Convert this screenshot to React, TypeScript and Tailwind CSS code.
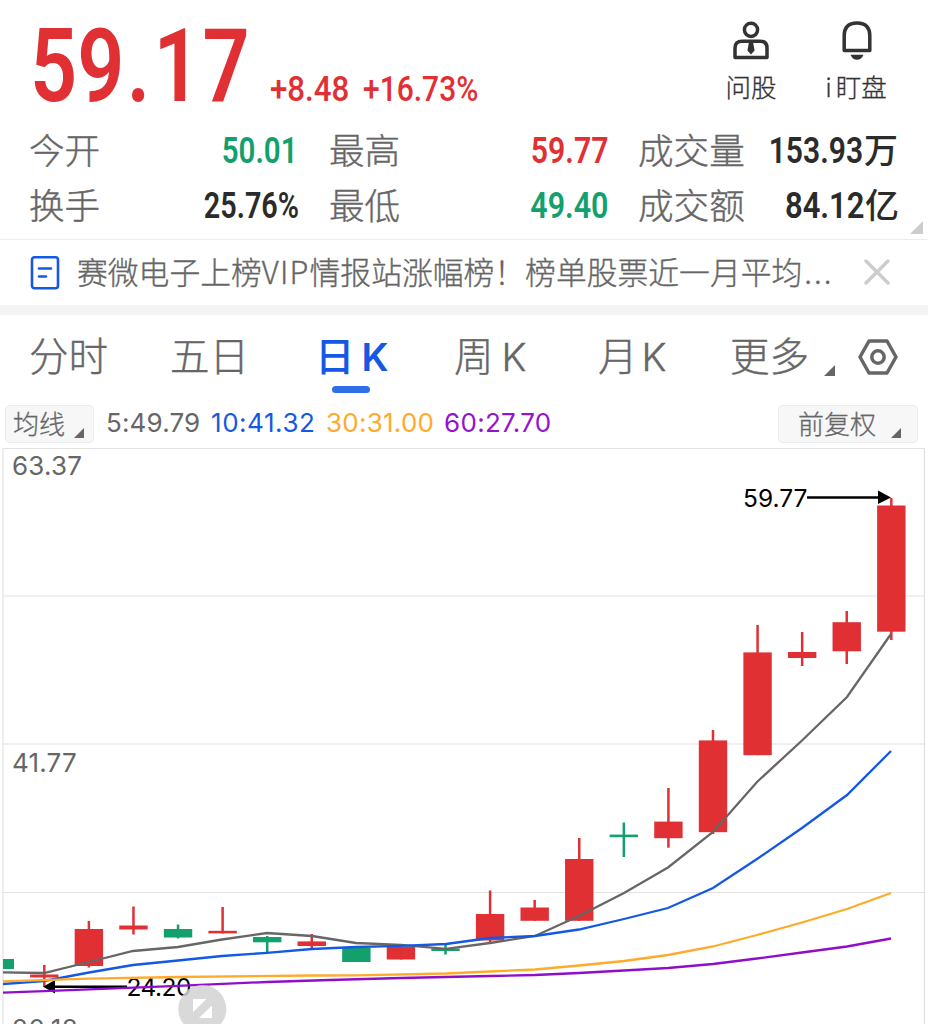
import clsx from "clsx"
import type { ReactNode } from "react"

type Candle = {
  high: number
  top: number
  bottom: number
  low: number
  up?: boolean
}

const RED = "#e03034"
const GREEN = "#12a06c"

// y positions on the chart canvas, one entry per trading day
const candles: Candle[] = [
  { high: 965, top: 974.5, bottom: 977.5, low: 987, up: true },
  { high: 921, top: 929, bottom: 966, low: 967.5, up: true },
  { high: 906.5, top: 925.5, bottom: 929.5, low: 934.5, up: true },
  { high: 924.5, top: 929, bottom: 937.5, low: 938.5 },
  { high: 907, top: 930.8, bottom: 933.4, low: 933.4, up: true },
  { high: 936, top: 937, bottom: 942.3, low: 952 },
  { high: 934, top: 941.4, bottom: 946, low: 948.5, up: true },
  { high: 948, top: 948, bottom: 962, low: 962 },
  { high: 947, top: 947, bottom: 959.5, low: 959.5, up: true },
  { high: 944.5, top: 948.5, bottom: 951, low: 954.5 },
  { high: 890.5, top: 914, bottom: 940.5, low: 942.5, up: true },
  { high: 900, top: 907.5, bottom: 920.8, low: 920.8, up: true },
  { high: 838, top: 859, bottom: 920.8, low: 920.8, up: true },
  { high: 822.5, top: 834.6, bottom: 837.2, low: 857 },
  { high: 788, top: 821.6, bottom: 838.2, low: 847.7, up: true },
  { high: 730, top: 740.4, bottom: 832.2, low: 834, up: true },
  { high: 625, top: 652.4, bottom: 755.2, low: 755.2, up: true },
  { high: 632, top: 652, bottom: 658, low: 666, up: true },
  { high: 611, top: 622.2, bottom: 651.3, low: 664, up: true },
  { high: 498, top: 505.5, bottom: 631.7, low: 640, up: true },
]

const averages = [
  {
    label: "5:49.79",
    textClass: "w-[105px] tracking-[0.15px] text-[#666666]",
    color: "#666666",
    points:
      "3,972.3 44,973 89,962 133,951 178,947 222,939.5 267,933 312,936 356,943 401,944.8 446,948.8 490,943 535,936 579,916 624,893 668,867.5 713,832 757,782 802,740.5 847,697 891,634",
  },
  {
    label: "10:41.32",
    textClass: "w-[115px] tracking-[0.55px] text-[#1458e4]",
    color: "#1458e4",
    points:
      "3,984 44,981 89,972.5 133,965 178,960.5 222,956 267,952.8 312,949 356,947 401,945.8 446,944 490,938 535,936 579,929.5 624,919 668,908 713,888 757,859 802,828 847,795 891,751",
  },
  {
    label: "30:31.00",
    textClass: "w-[118px] tracking-[0.25px] text-[#ffaa2b]",
    color: "#ffaa2b",
    points:
      "3,981.3 89,978.7 178,977 312,975.5 356,975.3 446,973.5 490,971.5 535,969.5 579,965.5 624,961 668,955 713,946.5 757,935 802,922.5 847,909 891,893",
  },
  {
    label: "60:27.70",
    textClass: "tracking-[0.3px] text-[#9413d0]",
    color: "#8f0fc9",
    points:
      "3,992.7 44,991.2 89,989.3 178,985.8 267,982 330,980 401,978 490,976 535,975 579,973 624,970.5 668,968 713,964 757,958.5 802,952.5 847,946.5 891,938.5",
  },
]

function Corner({ className }: { className?: string }) {
  return (
    <svg viewBox="0 0 10 10" className={clsx("shrink-0 fill-current", className)}>
      <path d="M10 0V10H0Z" />
    </svg>
  )
}

function Num({ children, className }: { children: ReactNode; className?: string }) {
  return (
    <span
      className={clsx(
        "mt-px inline-block origin-right whitespace-nowrap font-[Roboto,sans-serif] text-[36px] leading-[54px] font-[560]",
        className
      )}
    >
      {children}
    </span>
  )
}

function Stat({
  label,
  value,
  unit,
  color,
  className,
  numClass = "scale-x-[0.82]",
}: {
  label: string
  value: string
  unit?: string
  color: string
  className: string
  numClass?: string
}) {
  return (
    <div className={clsx("flex h-[55px] items-center justify-between", className)}>
      <span className="mt-[-4px] shrink-0 text-[35.6px] leading-[54px] font-light text-[#666666] [-webkit-text-stroke:0.4px]">
        {label}
      </span>
      <div className={clsx("flex w-0 items-center justify-end whitespace-nowrap", color)}>
        <Num className={numClass}>{value}</Num>
        {unit && <span className="mt-[-4px] ml-[1px] text-[34px] leading-[54px] font-medium">{unit}</span>}
      </div>
    </div>
  )
}

function Header() {
  return (
    <header className="flex h-[123px] justify-between">
      <div className="flex">
        <div className="flex h-[123px] w-[270px] pl-[30px] font-[Roboto,sans-serif] text-[102px] leading-[132px] font-semibold text-[#e03034]">
          <div className="origin-left scale-x-[0.81] whitespace-nowrap">
            59<span className="ml-[3px]">.</span>
            <span className="ml-[4px]">1</span>
            <span className="ml-[2px]">7</span>
          </div>
        </div>
        <div className="flex w-[220px] pt-[62px] font-[Roboto,sans-serif] text-[35.5px] leading-[55px] font-medium text-[#e03034]">
          <div className="w-[93px] shrink-0">
            <div className="origin-left scale-x-[0.88] whitespace-nowrap">+8.48</div>
          </div>
          <div className="shrink-0 origin-left scale-x-[0.845] whitespace-nowrap">+16.73%</div>
        </div>
      </div>
      <div className="flex pr-[40px] text-[25.5px] font-light text-[#333333] [-webkit-text-stroke:0.3px]">
        <div className="flex w-[52px] flex-col items-center pt-[20px]">
          <svg viewBox="0 0 38 40" className="mr-[2px] h-[40px] w-[38px]" fill="none" stroke="#333" strokeWidth="3.5">
            <circle cx="19" cy="9.8" r="6.6" />
            <path d="M3 37.500V28Q3 21.200 10 21.200H28Q35 21.200 35 28V37.500Z" strokeLinejoin="round" />
            <path d="M17 22H21L22.600 30.500L19 34.500L15.400 30.500Z" fill="#333" stroke="none" />
          </svg>
          <span className="mt-[7px] mr-[2px] whitespace-nowrap leading-[38px]">问股</span>
        </div>
        <div className="ml-[46px] flex w-[64px] flex-col items-center pt-[20px]">
          <svg viewBox="0 0 30 40" className="mr-[-1px] h-[40px] w-[30px]" fill="none" stroke="#333" strokeWidth="3.5">
            <path d="M2.200 30.500V16Q2.200 3 15 3T27.800 16V30.500Z" strokeLinejoin="round" />
            <path d="M8.500 34.800H21.500Q19.500 39.800 15 39.800T8.500 34.800Z" fill="#333" stroke="none" />
          </svg>
          <span className="mt-[7px] flex whitespace-nowrap leading-[38px]">
            <span className="mr-[4px]">i</span>盯盘
          </span>
        </div>
      </div>
    </header>
  )
}

function Stats() {
  return (
    <section className="relative h-[116px] pl-[29px]">
      <div className="flex">
        <Stat label="今开" value="50.01" color="text-[#12a06c]" className="w-[268px]" />
        <Stat label="最高" value="59.77" color="text-[#e03034]" className="ml-[32px] w-[279px]" numClass="scale-x-[0.84]" />
        <Stat label="成交量" value="153.93" unit="万" color="text-[#2b2b2b]" className="ml-[30px] w-[260px]" numClass="scale-x-[0.835]" />
      </div>
      <div className="flex">
        <Stat label="换手" value="25.76%" color="text-[#2b2b2b]" className="w-[270px]" numClass="scale-x-[0.8]" />
        <Stat label="最低" value="49.40" color="text-[#12a06c]" className="ml-[30px] w-[279px]" numClass="scale-x-[0.845]" />
        <Stat label="成交额" value="84.12" unit="亿" color="text-[#2b2b2b]" className="ml-[30px] w-[261px]" numClass="scale-x-[0.86]" />
      </div>
      <Corner className="absolute right-[5px] bottom-[5px] size-[13px] text-[#cccccc]" />
    </section>
  )
}

function Notice() {
  return (
    <section className="flex h-[66px] items-center border-t border-[#ececec] pl-[30px]">
      <svg viewBox="0 0 30 34" className="h-[34px] w-[30px]" fill="none" stroke="#1458e4" strokeWidth="2.6" strokeLinecap="round">
        <rect x="2" y="1.300" width="26" height="31" rx="2.500" />
        <path d="M9 12.500H21M9 20.500H16" />
      </svg>
      <p className="mt-[-4px] ml-[17px] w-[770px] whitespace-nowrap text-[30.8px] leading-[46px] font-light text-[#666666] [-webkit-text-stroke:0.35px]">
        赛微电子上榜<span className="tracking-[1.2px]">VIP</span>情报站涨幅榜！榜单股票近一月平均
        <span className="ml-[2px] tracking-[2px]">...</span>
      </p>
      <svg viewBox="0 0 26 26" className="mt-[-1px] ml-[17px] size-[26px]" stroke="#cccccc" strokeWidth="3.4" strokeLinecap="round">
        <path d="M2 2L24 24M24 2L2 24" />
      </svg>
    </section>
  )
}

function Tabs() {
  return (
    <nav className="flex h-[86px] pt-[9px] pl-[29px] text-[39.5px] leading-[60px] font-light text-[#666666] [-webkit-text-stroke:0.4px]">
      <span className="w-[141px]">分时</span>
      <span className="w-[145px]">五日</span>
      <div className="flex w-[139px] flex-col font-medium text-[#1458e4] [-webkit-text-stroke:0px]">
        <span className="h-[62px]">
          日<span className="ml-[7px] font-[Inter,sans-serif] text-[38.5px] font-semibold">K</span>
        </span>
        <span className="ml-[17px] h-[7px] w-[38px] rounded-full bg-[#306eea]" />
      </div>
      <span className="w-[144px]">
        周<span className="ml-[8px] font-[Inter,sans-serif] text-[38.5px] font-light">K</span>
      </span>
      <span className="w-[132px]">
        月<span className="ml-[4px] font-[Inter,sans-serif] text-[38.5px] font-light">K</span>
      </span>
      <span>更多</span>
      <Corner className="mt-[41px] ml-[15px] size-[11px]" />
      <svg viewBox="0 0 40 36" className="mt-[15px] ml-[22.500px] h-[36px] w-[40px]" fill="none" stroke="#666" strokeWidth="3.5">
        <path d="M11 2H29L38 18L29 34H11L2 18Z" strokeLinejoin="round" />
        <circle cx="20" cy="18" r="6.200" />
      </svg>
    </nav>
  )
}

function Toolbar() {
  return (
    <div className="flex h-[47px] items-start pt-[4px] pr-[10px] pl-[5px] text-[26px] font-light text-[#666666]">
      <button className="flex h-[38px] w-[89px] items-center rounded-[5px] border border-[#ececec] bg-[#f7f7f7] pl-[7px]">
        <span className="mt-[-4px] [-webkit-text-stroke:0.3px]">均线</span>
        <Corner className="mt-[17px] ml-[9px] size-[10px]" />
      </button>
      <div className="ml-[12px] flex font-[Inter,sans-serif] text-[26px] leading-[36px] font-normal">
        {averages.map((a) => (
          <span key={a.label} className={a.textClass}>
            {a.label}
          </span>
        ))}
      </div>
      <button className="ml-auto flex h-[38px] w-[140px] items-center rounded-[5px] border border-[#ececec] bg-[#f7f7f7] pl-[19px]">
        <span className="mt-[-4px] [-webkit-text-stroke:0.3px]">前复权</span>
        <Corner className="mt-[17px] ml-[15px] size-[10px]" />
      </button>
    </div>
  )
}

function KChart() {
  return (
    <svg viewBox="0 448 928 576" className="block h-[576px] w-[928px] font-[Inter,sans-serif] text-[26px]">
      <g stroke="#e2e2e2" strokeWidth="1.2" fill="none">
        <path d="M3 448.500H924M3 596H924M3 744H924M3 892.500H924" />
        <path d="M3 448V1024M924.500 448V1024" />
      </g>
      <g fill="#666666">
        <text x="12" y="475" letterSpacing="0.2">63.37</text>
        <text x="12" y="772" letterSpacing="0.2">41.77</text>
        <text x="12" y="1038" letterSpacing="0.6">20.18</text>
      </g>

      <rect x="3" y="959" width="11" height="10" fill={GREEN} />
      {candles.map((c, i) => {
        const x = 44.3 + i * 44.58
        return (
          <g key={i} fill={c.up ? RED : GREEN}>
            <rect x={x - 1.25} y={c.high} width="2.5" height={c.low - c.high} />
            <rect x={x - 14.2} y={c.top} width="28.4" height={c.bottom - c.top} />
          </g>
        )
      })}

      {/* period high / low markers */}
      <path d="M807 497.500H880" stroke="#000" strokeWidth="2.500" />
      <path d="M878 490.500L891 497.500L878 504Z" />
      <text x="743" y="507" fontSize="24.5">59.77</text>
      <path d="M54 986.700H127" stroke="#000" strokeWidth="2.500" />
      <path d="M43 986.700L55 980V993.500Z" />
      <text x="126.500" y="996" fontSize="24.5" letterSpacing="-0.5">24.20</text>

      {averages.map((a) => (
        <polyline key={a.label} points={a.points} fill="none" stroke={a.color} strokeWidth="2.300" />
      ))}

      <circle cx="202.300" cy="1009" r="24" fill="#d2d2d2" fillOpacity="0.85" />
      <path d="M193 999H206.500L193 1012ZM212 1005.500V1018H199Z" fill="#fff" />
    </svg>
  )
}

export default function App() {
  return (
    <main className="flex h-[1024px] w-[928px] flex-col overflow-hidden bg-white font-['Noto_Sans_CJK_SC',sans-serif]">
      <Header />
      <Stats />
      <Notice />
      <div className="h-[10px] shrink-0 bg-[#f4f4f4]" />
      <Tabs />
      <Toolbar />
      <KChart />
    </main>
  )
}
